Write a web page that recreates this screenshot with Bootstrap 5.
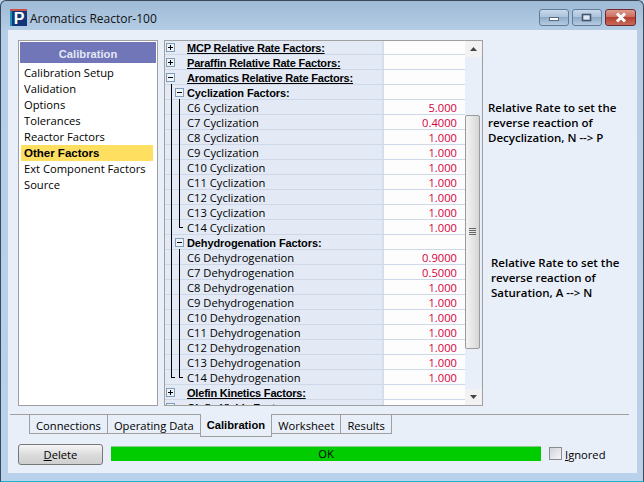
<!DOCTYPE html>
<html lang="en">
<head>
  <meta charset="UTF-8">
  <meta name="viewport" content="width=device-width, initial-scale=1.0">
  <link href="https://cdn.jsdelivr.net/npm/bootstrap@5.3.2/dist/css/bootstrap.min.css" rel="stylesheet">
  <title>Aromatics Reactor-100</title>
  <style>
    html, body { height: 100%; }
    body { background: #b9d1ea; font-family: "Open Sans", "Liberation Sans", sans-serif; font-size: 11.2px; color: #000; overflow: hidden; }
    .win-frame { width: 644px; height: 482px; border: 1px solid #3a4a5a; border-bottom-color: #19b5c9; border-radius: 6px 6px 0 0; background: linear-gradient(#9fbad6 0, #b5cde6 30px, #b9d1ea 100%); padding: 0 6px 7px 7px; }
    .win-title { height: 29px; font-size: 12px; color: #111; padding-top: 7px; padding-bottom: 1px; flex: none; }
    .win-logo { width: 17px; height: 17px; margin: 0 3px 2px 2px; }
    .win-btns { margin: 0 1px 2px 0; }
    .win-btn { width: 30px; height: 17px; border: 1px solid #5f7c9a; border-radius: 3px; background: linear-gradient(#c9d9ea, #a9c1da 50%, #90abc8 50%, #b5cce2); margin-left: 3px; }
    .win-close { width: 31px; border-color: #6d2a30; background: linear-gradient(#dd9b90, #c96a5b 50%, #b5402f 50%, #c9695a); }
    .client { height: 443px; background: #e8eff9; padding: 10px 0 0; flex: none; }
    .main-area { height: 366px; padding-left: 10px; flex: none; }
    .side-panel { width: 140px; border: 1px solid #a0a0a0; background: #fff; padding: 1px; margin-right: 6px; }
    .side-head { height: 21px; background: #7076b8; color: #e3e8f5; text-align: center; font-family: "Liberation Sans", sans-serif; font-weight: 700; font-size: 11.2px; line-height: 24px; }
    .side-item { height: 16px; line-height: 16px; padding-left: 3px; margin: 0 1px; white-space: nowrap; }
    .side-first { margin-top: 2px; }
    .side-sel { background: #ffdf60; font-family: "Liberation Sans", sans-serif; font-weight: 700; font-size: 11.5px; margin-right: 3px; }
    .tree-box { width: 319px; border: 1px solid #a0a0a0; background: #e8eff9; }
    .tree-grid { width: 300px; height: 364px; overflow: hidden; }
    .grid-row { height: 15px; flex: none; }
    .grid-first { margin-top: -1px; }
    .name-cell { width: 219px; height: 15px; flex: none; background: #e3eaf5; border-bottom: 1px solid #ced8e8; border-right: 2px solid #d3deee; }
    .val-cell { flex: 1; height: 15px; background: #fdfdfe; border-bottom: 1px solid #ced8e8; color: #d6003c; text-align: right; padding-right: 8px; line-height: 16px; }
    .gut { width: 8px; height: 15px; flex: none; position: relative; }
    .gut-a { margin-left: 2px; }
    .gut-text { margin-left: 4px; line-height: 16px; white-space: nowrap; }
    .row-head, .row-top { font-family: "Liberation Sans", sans-serif; font-weight: 700; font-size: 11px; }
    .row-head { letter-spacing: -0.1px; }
    .row-top { text-decoration: underline; letter-spacing: -0.2px; }
    .line-on::before { content: ""; position: absolute; left: 4px; top: -1px; bottom: -1px; width: 1px; background: #000; }
    .line-end::before { content: ""; position: absolute; left: 4px; top: -1px; height: 9px; width: 4px; border-left: 1px solid #000; border-bottom: 1px solid #000; }
    .box-icon { position: absolute; left: 0; top: 3px; width: 9px; height: 9px; border: 1px solid #7f9db9; background: #eef3fa; z-index: 1; }
    .gut-a .box-icon { left: -1px; }
    .box-icon::before { content: ""; position: absolute; left: 1px; right: 1px; top: 3px; height: 1px; background: #000; }
    .box-plus::after { content: ""; position: absolute; top: 1px; bottom: 1px; left: 3px; width: 1px; background: #000; }
    .scroll-col { width: 17px; }
    .scroll-btn { height: 16px; background: #f2f2f2; flex: none; }
    .scroll-gap { height: 58px; flex: none; }
    .scroll-thumb { height: 234px; flex: none; margin: 0 2px 0 0; border: 1px solid #9a9a9a; border-radius: 2px; background: linear-gradient(90deg, #f4f4f4, #d6d6d6); }
    .grip { width: 7px; height: 1px; background: #666; margin-bottom: 1px; }
    .note-col { font-weight: 600; font-size: 11.5px; line-height: 15px; padding-left: 5px; }
    .note-one { margin-top: 60px; }
    .note-two { margin-top: 110px; padding-left: 3px; }
    .tab-strip { height: 23px; margin: 8px 8px 0 2px; border-top: 1px solid #a0a0a0; padding-left: 19px; flex: none; }
    .tab-item { height: 19px; border: 1px solid #a0a0a0; border-top: 0; padding: 0 6px; line-height: 21px; margin-right: -1px; background: #e8eff9; white-space: nowrap; }
    .tab-on { height: 23px; margin-top: -1px; font-family: "Liberation Sans", sans-serif; font-weight: 700; font-size: 11.2px; line-height: 23px; position: relative; }
    .foot-row { padding: 7px 0 0 10px; }
    .del-btn { width: 85px; height: 21px; border: 1px solid #777; border-radius: 3px; background: linear-gradient(#f6f6f6, #dcdcdc 50%, #cfcfcf); text-align: center; line-height: 20px; margin-right: 8px; }
    .ok-bar { width: 430px; height: 15px; background: #00cc00; border-top: 1px solid #8fc88f; text-align: center; line-height: 14px; margin: 2px 8px 0 0; }
    .ign-box { width: 13px; height: 13px; border: 1px solid #8c8c8c; background: linear-gradient(135deg, #cfd3dc, #f6f7fa); margin: 3px 3px 0 0; }
    .ign-label { line-height: 17px; margin-top: 2px; }
  </style>
</head>
<body>
  <div class="win-frame d-flex flex-column">
    <div class="win-title d-flex align-items-center">
      <svg class="win-logo" viewBox="0 0 17 17">
        <rect width="17" height="17" fill="#12367a"/>
        <rect x="0" y="0" width="17" height="2" fill="#c8504a"/>
        <rect x="0" y="2" width="2" height="15" fill="#1f8fb8"/>
        <text x="9" y="15" font-family="Liberation Sans" font-weight="700" font-size="16" fill="#fff" text-anchor="middle">P</text>
      </svg>
      <span>Aromatics Reactor-100</span>
      <div class="win-btns d-flex ms-auto">
        <div class="win-btn d-flex align-items-center justify-content-center">
          <svg width="12" height="8" viewBox="0 0 12 8"><rect x="1.5" y="3.5" width="9" height="3" fill="#fff" stroke="#55687f"/></svg>
        </div>
        <div class="win-btn d-flex align-items-center justify-content-center">
          <svg width="12" height="10" viewBox="0 0 12 10"><rect x="1.5" y="1.5" width="8" height="6" fill="#dfe8f2" stroke="#3f556e" stroke-width="1.6"/></svg>
        </div>
        <div class="win-btn win-close d-flex align-items-center justify-content-center">
          <svg width="14" height="11" viewBox="0 0 14 11"><path d="M3 1.5 L11 9.5 M11 1.5 L3 9.5" stroke="#fff" stroke-width="3"/></svg>
        </div>
      </div>
    </div>

    <div class="client d-flex flex-column">
      <div class="main-area d-flex">
        <div class="side-panel">
          <div class="side-head">Calibration</div>
          <div class="side-item side-first">Calibration Setup</div>
          <div class="side-item">Validation</div>
          <div class="side-item">Options</div>
          <div class="side-item">Tolerances</div>
          <div class="side-item">Reactor Factors</div>
          <div class="side-item side-sel">Other Factors</div>
          <div class="side-item">Ext Component Factors</div>
          <div class="side-item">Source</div>
        </div>

        <div class="tree-box d-flex">
          <div class="tree-grid d-flex flex-column" id="treeGrid"></div>
          <div class="scroll-col d-flex flex-column">
            <div class="scroll-btn d-flex align-items-center justify-content-center">
              <svg width="7" height="4" viewBox="0 0 7 4"><path d="M3.5 0 L7 4 L0 4 Z" fill="#444"/></svg>
            </div>
            <div class="scroll-gap"></div>
            <div class="scroll-thumb d-flex flex-column align-items-center justify-content-center">
              <div class="grip"></div><div class="grip"></div><div class="grip"></div><div class="grip"></div>
            </div>
            <div class="flex-grow-1"></div>
            <div class="scroll-btn d-flex align-items-center justify-content-center">
              <svg width="7" height="4" viewBox="0 0 7 4"><path d="M0 0 L7 0 L3.5 4 Z" fill="#444"/></svg>
            </div>
          </div>
        </div>

        <div class="note-col">
          <div class="note-one">Relative Rate to set the<br>reverse reaction of<br>Decyclization, N --&gt; P</div>
          <div class="note-two">Relative Rate to set the<br>reverse reaction of<br>Saturation, A --&gt; N</div>
        </div>
      </div>

      <div class="tab-strip d-flex">
        <div class="tab-item">Connections</div>
        <div class="tab-item">Operating Data</div>
        <div class="tab-item tab-on">Calibration</div>
        <div class="tab-item">Worksheet</div>
        <div class="tab-item">Results</div>
      </div>

      <div class="foot-row d-flex">
        <div class="del-btn"><u>D</u>elete</div>
        <div class="ok-bar">OK</div>
        <div class="ign-box"></div>
        <div class="ign-label"><u>I</u>gnored</div>
      </div>
    </div>
  </div>

  <script>
    // kind: top = level 0 group, head = level 1 group, leaf = data row
    let rows = [
      { kind: "top", text: "MCP Relative Rate Factors:", plus: true },
      { kind: "top", text: "Paraffin Relative Rate Factors:", plus: true },
      { kind: "top", text: "Aromatics Relative Rate Factors:" },
      { kind: "head", text: "Cyclization Factors:" }
    ];
    let cyc = ["5.000", "0.4000", "1.000", "1.000", "1.000", "1.000", "1.000", "1.000", "1.000"];
    let deh = ["0.9000", "0.5000", "1.000", "1.000", "1.000", "1.000", "1.000", "1.000", "1.000"];
    cyc.forEach((v, i) => rows.push({ kind: "leaf", text: `C${i + 6} Cyclization`, val: v, end: i == 8 }));
    rows.push({ kind: "head", text: "Dehydrogenation Factors:" });
    deh.forEach((v, i) => rows.push({ kind: "leaf", text: `C${i + 6} Dehydrogenation`, val: v, end: i == 8, last: i == 8 }));
    rows.push({ kind: "top", text: "Olefin Kinetics Factors:", plus: true });
    rows.push({ kind: "top", text: "Olefin Yields Factors:", plus: true });

    let html = "";
    rows.forEach((r, n) => {
      let gutA = "", gutB = "", cls = "";
      if (r.kind == "top") {
        cls = "row-top";
        gutA = `<i class="box-icon ${r.plus ? "box-plus" : ""}"></i>`;
      } else if (r.kind == "head") {
        cls = "row-head";
        gutB = `<i class="box-icon"></i>`;
      }
      let aLine = (r.kind != "top") ? (r.last ? "line-end" : "line-on") : "";
      let bLine = (r.kind == "leaf") ? (r.end ? "line-end" : "line-on") : "";
      html += `<div class="grid-row d-flex ${n == 0 ? "grid-first" : ""}">
        <div class="name-cell d-flex">
          <span class="gut gut-a ${aLine}">${gutA}</span>
          <span class="gut ${bLine}">${gutB}</span>
          <span class="gut-text ${cls}">${r.text}</span>
        </div>
        <div class="val-cell">${r.val || ""}</div>
      </div>`;
    });
    document.getElementById("treeGrid").innerHTML = html;
  </script>
  <script src="https://cdn.jsdelivr.net/npm/bootstrap@5.3.2/dist/js/bootstrap.bundle.min.js"></script>
</body>
</html>
